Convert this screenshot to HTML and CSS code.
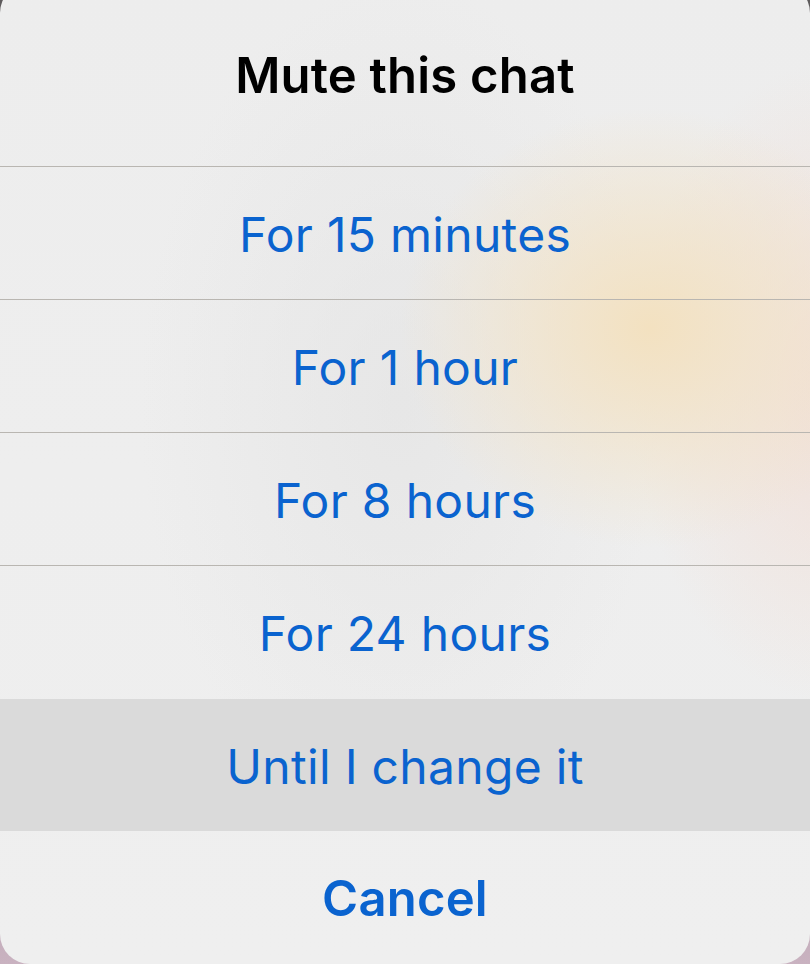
FILE: index.html
```html
<!DOCTYPE html>
<html lang="en">
<head>
<meta charset="utf-8">
<title>Mute this chat</title>
<link rel="stylesheet" href="styles.css">
</head>
<body>
<div class="backdrop">
  <div class="sheet">
    <div class="sheet-title">Mute this chat</div>
    <div class="option">For 15 minutes</div>
    <div class="option">For 1 hour</div>
    <div class="option">For 8 hours</div>
    <div class="option option-last">For 24 hours</div>
    <div class="option option-active">Until I change it</div>
    <div class="option option-cancel">Cancel</div>
  </div>
</div>
</body>
</html>
```

FILE: styles.css
```css
html, body {
  margin: 0;
  padding: 0;
  width: 810px;
  height: 964px;
  overflow: hidden;
}

.backdrop {
  width: 810px;
  height: 964px;
  overflow: hidden;
  background: linear-gradient(180deg, #5e5b5c 0%, #8a8488 50%, #c9b2c0 100%);
}

.sheet {
  margin-top: -17px;
  height: 981px;
  border-radius: 30px;
  overflow: hidden;
  display: flex;
  flex-direction: column;
  font-family: Inter, "Liberation Sans", sans-serif;
  text-align: center;
  background:
    radial-gradient(ellipse 250px 220px at 650px 345px, rgba(243, 225, 192, 1) 0%, rgba(242, 227, 200, 0.75) 40%, rgba(239, 236, 232, 0) 100%),
    radial-gradient(ellipse 200px 320px at 830px 400px, rgba(242, 220, 210, 0.8) 0%, rgba(240, 230, 226, 0) 100%),
    radial-gradient(ellipse 260px 420px at 400px 420px, rgba(226, 226, 226, 0.6) 0%, rgba(226, 226, 226, 0) 100%),
    linear-gradient(180deg, #ededed 0%, #efefef 100%);
}

.sheet-title {
  flex: 0 0 auto;
  height: 184px;
  box-sizing: border-box;
  border-bottom: 1px solid #b9b6b1;
  display: flex;
  align-items: center;
  justify-content: center;
  padding-top: 2px;
  font-size: 49px;
  font-weight: 600;
  color: #000;
  letter-spacing: 0.2px;
}

.option {
  flex: 0 0 auto;
  height: 133px;
  box-sizing: border-box;
  border-bottom: 1px solid #b9b6b1;
  display: flex;
  align-items: center;
  justify-content: center;
  padding-top: 2px;
  font-size: 48px;
  font-weight: 400;
  color: #0a63cf;
  letter-spacing: 0.3px;
}

.option-last {
  border-bottom: none;
}

.option-active {
  height: 132px;
  border-bottom: none;
  background: #dadada;
}

.option-cancel {
  border-bottom: none;
  font-size: 49px;
  font-weight: 600;
  letter-spacing: 0.2px;
  padding-top: 2px;
}
```
